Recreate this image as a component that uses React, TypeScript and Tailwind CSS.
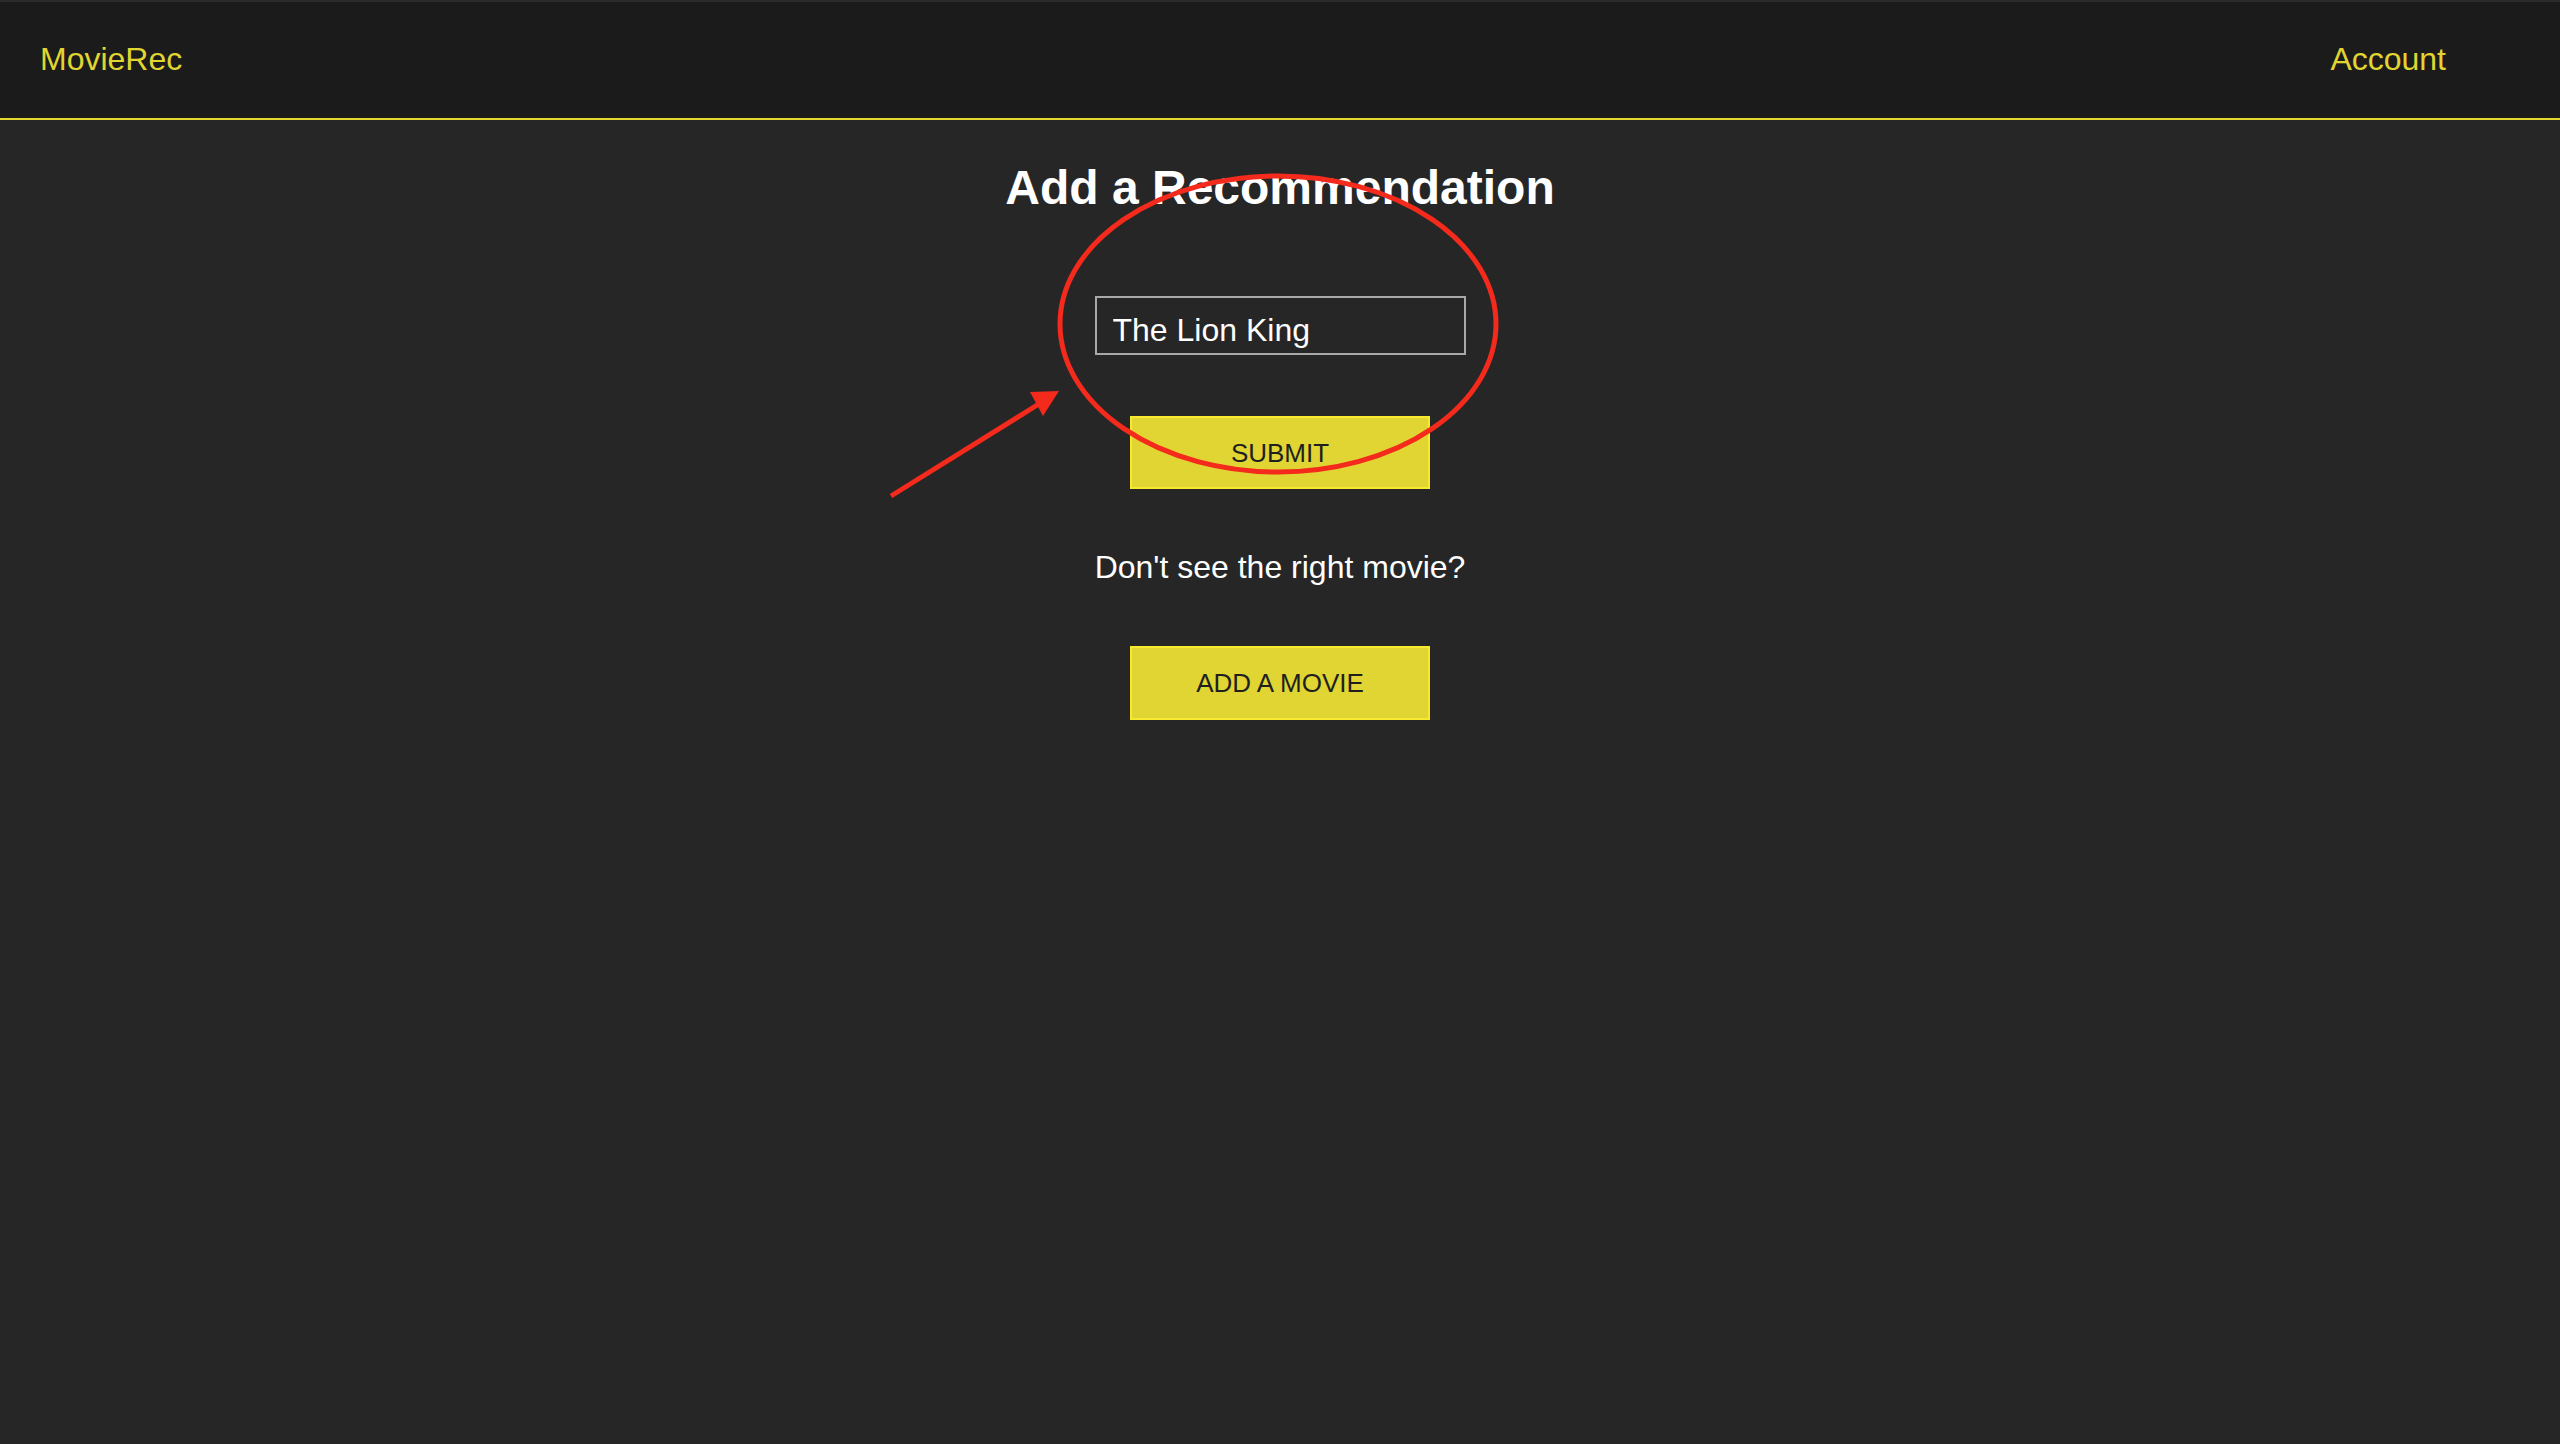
import { useState } from "react";

const FONT = "font-['Liberation_Sans',Arial,Helvetica,sans-serif]";

function Header() {
  return (
    <header className="flex h-[120px] items-center justify-between border-t-2 border-b-2 border-t-[#2b2b2b] border-b-[#e3d82f] bg-[#1b1b1b] pb-[2px] pl-10 pr-[114px]">
      <a href="#" className="text-[32px] leading-none text-[#e0d531]">
        MovieRec
      </a>
      <a href="#" className="text-[32px] leading-none text-[#e0d531]">
        Account
      </a>
    </header>
  );
}

// Red markup someone drew over the screenshot (ellipse + arrow)
function Annotation() {
  return (
    <svg
      aria-hidden
      className="pointer-events-none absolute left-0 top-0"
      width={2560}
      height={1444}
      viewBox="0 0 2560 1444"
    >
      <ellipse cx={1278} cy={324} rx={218} ry={148} fill="none" stroke="#f42a1c" strokeWidth={5} />
      <line x1={891} y1={496} x2={1042} y2={402} stroke="#f42a1c" strokeWidth={5} />
      <polygon points="1059,391 1030,392 1043,416" fill="#f42a1c" />
    </svg>
  );
}

export default function App() {
  const [title, setTitle] = useState("The Lion King");

  return (
    <div className={`relative min-h-screen bg-[#262626] ${FONT}`}>
      <Header />
      <main className="flex flex-col items-center">
        <h1 className="mt-11 text-[48px] font-bold leading-none text-white">Add a Recommendation</h1>
        <input
          value={title}
          onChange={(e) => setTitle(e.target.value)}
          className="mt-[84px] box-border h-[59px] w-[371px] border-2 border-[#a8a8a8] bg-transparent pl-4 pt-[10px] text-[32px] text-white outline-none"
        />
        <button className="mt-[61px] h-[73px] w-[300px] border-2 border-[#f7ea2e] bg-[#e0d533] text-[26px] leading-none text-[#1f1f1f]">
          SUBMIT
        </button>
        <p className="mt-[62px] text-[32px] leading-none text-white">Don't see the right movie?</p>
        <button className="mt-[63px] h-[74px] w-[300px] border-2 border-[#f7ea2e] bg-[#e0d533] text-[26px] leading-none text-[#1f1f1f]">
          ADD A MOVIE
        </button>
      </main>
      <Annotation />
    </div>
  );
}
